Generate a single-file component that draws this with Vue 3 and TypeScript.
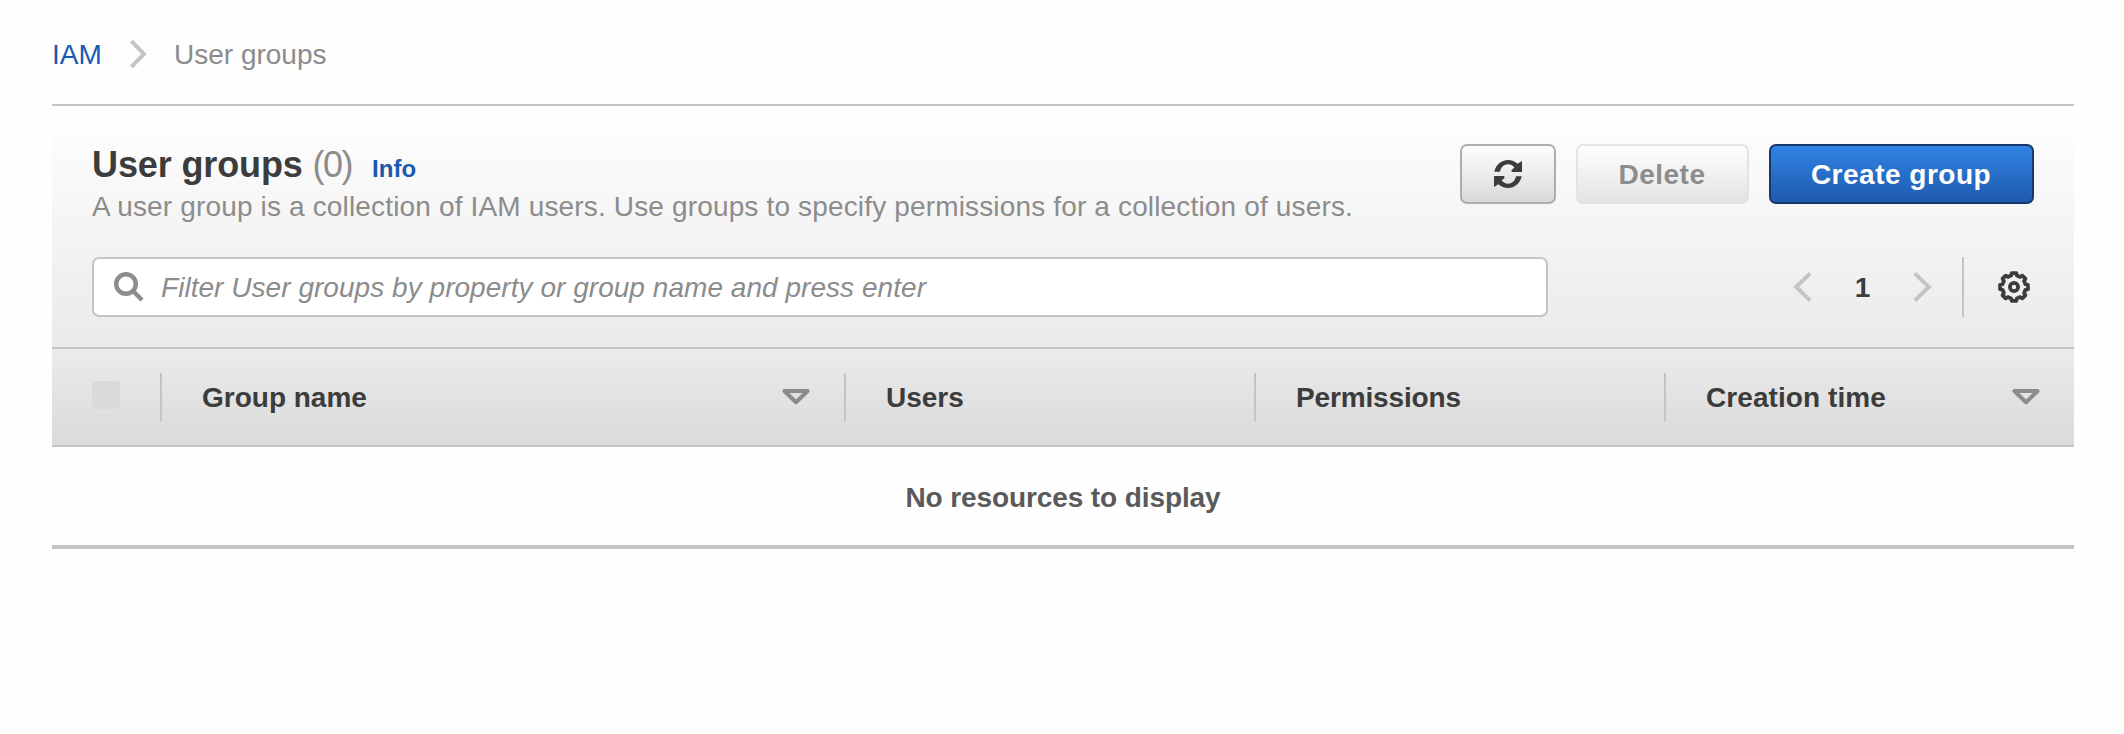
<script setup lang="ts">
interface Column {
  key: string
  label: string
  sortable: boolean
}

const columns: Column[] = [
  { key: 'name', label: 'Group name', sortable: true },
  { key: 'users', label: 'Users', sortable: false },
  { key: 'permissions', label: 'Permissions', sortable: false },
  { key: 'created', label: 'Creation time', sortable: true },
]

const groupCount = 0

// Outline of the settings gear: eight teeth around (16, 16)
function gearOutline(): string {
  const corners: string[] = []
  const point = (radius: number, degrees: number): string => {
    const angle = (degrees * Math.PI) / 180
    return `${(16 + radius * Math.cos(angle)).toFixed(2)} ${(16 + radius * Math.sin(angle)).toFixed(2)}`
  }
  for (let tooth = 0; tooth < 8; tooth++) {
    const middle = tooth * 45
    corners.push(point(11.8, middle - 14), point(14.1, middle - 9), point(14.1, middle + 9), point(11.8, middle + 14))
  }
  return `M${corners.join('L')}Z`
}

const gearPath = gearOutline()
</script>

<template>
  <main class="page">
    <nav class="breadcrumb">
      <a class="link">IAM</a>
      <svg class="crumb-arrow" width="18" height="30" viewBox="0 0 18 30">
        <path d="M2.4 2.2 15 15 2.4 27.8" />
      </svg>
      <span class="crumb">User groups</span>
    </nav>

    <section class="panel">
      <header class="panel-head">
        <div class="title-row">
          <div class="titles">
            <h1>User groups <span class="count">({{ groupCount }})</span><a class="info">Info</a></h1>
            <p class="description">A user group is a collection of IAM users. Use groups to specify permissions for a collection of users.</p>
          </div>
          <div class="actions">
            <button class="btn refresh" aria-label="Refresh">
              <svg width="28" height="28" viewBox="0 0 28 28">
                <path d="M.3 11.8C1.8 5 7.3 0 14 0c3.7 0 7 1.4 9.6 3.8L28 1v11H18.2Q17 11.4 17.4 10.2L20.4 7.4C18.7 5.5 16.5 4.3 14 4.3 10 4.3 6.9 7.2 6 11.8Z" />
                <path transform="rotate(180 14 14)" d="M.3 11.8C1.8 5 7.3 0 14 0c3.7 0 7 1.4 9.6 3.8L28 1v11H18.2Q17 11.4 17.4 10.2L20.4 7.4C18.7 5.5 16.5 4.3 14 4.3 10 4.3 6.9 7.2 6 11.8Z" />
              </svg>
            </button>
            <button class="btn delete" disabled>Delete</button>
            <button class="btn primary">Create group</button>
          </div>
        </div>

        <div class="tool-row">
          <label class="search">
            <svg width="30" height="30" viewBox="0 0 30 30">
              <circle cx="12" cy="12" r="9.8" />
              <path d="M18.8 18.8 28 28" />
            </svg>
            <input type="text" placeholder="Filter User groups by property or group name and press enter" />
          </label>
          <div class="pager">
            <svg width="20" height="32" viewBox="0 0 20 32"><path d="M17.2 2.4 3.2 16 17.2 29.6" /></svg>
            <span class="page-number">1</span>
            <svg width="20" height="32" viewBox="0 0 20 32"><path d="M2.8 2.4 16.8 16 2.8 29.6" /></svg>
          </div>
          <div class="settings">
            <svg width="32" height="32" viewBox="0 0 32 32">
              <path :d="gearPath" />
              <circle cx="16" cy="16" r="4.1" />
            </svg>
          </div>
        </div>
      </header>

      <div class="table-head">
        <div class="cell select"><span class="checkbox"></span></div>
        <div v-for="column in columns" :key="column.key" class="cell" :class="column.key">
          <span class="label">{{ column.label }}</span>
          <svg v-if="column.sortable" width="28" height="16" viewBox="0 0 28 16">
            <path d="M2.4 2H25.6L14 13.2Z" />
          </svg>
        </div>
      </div>
      <div class="empty">No resources to display</div>
    </section>
  </main>
</template>

<style>
body {
  background: #fefefe;
}
</style>

<style scoped>
.page {
  box-sizing: border-box;
  width: 2124px;
  height: 734px;
  padding: 34px 50px 0 52px;
  font-family: "Liberation Sans", Arial, sans-serif;
  font-size: 28px;
  color: #3c3c3c;
}

svg {
  display: block;
  flex: none;
  fill: none;
}

.breadcrumb {
  display: flex;
  align-items: center;
  height: 40px;
  color: #8c8c8c;
}

.link,
.info {
  color: #1b59b0;
}

.link {
  width: 77px;
  padding-top: 2px;
}

.crumb {
  padding-top: 2px;
}

.crumb-arrow {
  margin-right: 27px;
  stroke: #c4c4c4;
  stroke-width: 4;
}

.panel {
  width: 2022px;
  margin-top: 30px;
}

.panel-head {
  box-sizing: border-box;
  height: 245px;
  padding: 36px 40px 0;
  border-top: 2px solid #c4c4c4;
  border-bottom: 2px solid #c4c4c4;
  background: linear-gradient(#ffffff, #eaeaea);
}

.title-row {
  display: flex;
  justify-content: space-between;
  height: 115px;
}

h1 {
  height: 45px;
  margin: 0;
  font-size: 36px;
  line-height: 45px;
  letter-spacing: -0.12px;
  white-space: nowrap;
}

.count {
  font-weight: 400;
  color: #8c8c8c;
  letter-spacing: -1.5px;
}

.info {
  margin-left: 20px;
  font-size: 24px;
  line-height: 1;
  letter-spacing: 0;
}

.description {
  margin: 0;
  line-height: 40px;
  letter-spacing: 0.155px;
  color: #8c8c8c;
  white-space: nowrap;
}

.actions {
  display: flex;
  gap: 20px;
  margin-top: 2px;
}

.btn {
  display: flex;
  align-items: center;
  justify-content: center;
  box-sizing: border-box;
  height: 60px;
  padding: 1px 1px 0 0;
  border: 2px solid #adadad;
  border-radius: 7px;
  background: linear-gradient(#ffffff, #d8d8d8) border-box;
  font: bold 28px "Liberation Sans", Arial, sans-serif;
  letter-spacing: 0.5px;
}

.refresh {
  width: 96px;
  padding: 0;
}

.refresh svg {
  fill: #3c3c3c;
}

.delete {
  width: 173px;
  border-color: #e3e3e3;
  background: linear-gradient(#ffffff, #e2e2e2) border-box;
  color: #8c8c8c;
}

.primary {
  width: 265px;
  border-color: #16396b;
  background: linear-gradient(#3184e5, #1e59ac) border-box;
  color: #ffffff;
}

.tool-row {
  display: flex;
  height: 60px;
}

.search {
  display: flex;
  align-items: center;
  box-sizing: border-box;
  width: 1456px;
  padding-left: 20px;
  border: 2px solid #c4c4c4;
  border-radius: 7px;
  background: #ffffff;
}

.search svg {
  stroke: #8c8c8c;
  stroke-width: 4.4;
}

input {
  flex: 1;
  height: 50px;
  margin: 0 0 0 17px;
  padding: 2px 0 0;
  border: 0;
  outline: 0;
  background: none;
  font: 28px "Liberation Sans", Arial, sans-serif;
  letter-spacing: 0.04px;
}

input::placeholder {
  font-style: italic;
  color: #8c8c8c;
}

.pager {
  display: flex;
  align-items: center;
  justify-content: space-between;
  width: 139px;
  margin-left: 245px;
}

.pager svg {
  stroke: #c4c4c4;
  stroke-width: 4;
}

.page-number {
  padding-top: 1px;
  font-weight: 700;
}

.settings {
  display: flex;
  align-items: center;
  margin-left: 30px;
  padding-left: 34px;
  border-left: 2px solid #c4c4c4;
}

.settings svg {
  stroke: #3c3c3c;
  stroke-width: 3.8;
  stroke-linejoin: round;
}

.table-head {
  display: grid;
  grid-template-columns: 110px 684px 410px 410px 408px;
  align-items: center;
  height: 96px;
  border-bottom: 2px solid #c4c4c4;
  background: linear-gradient(#ebebeb, #dadada);
  font-weight: 700;
}

.cell {
  display: flex;
  align-items: center;
  justify-content: space-between;
  box-sizing: border-box;
  height: 48px;
  padding: 0 34px 0 40px;
  border-right: 2px solid #c4c4c4;
}

.cell:last-child {
  border-right: 0;
}

.label {
  padding-top: 2px;
}

.permissions {
  letter-spacing: -0.15px;
}

.created {
  letter-spacing: 0.08px;
}

.cell svg {
  stroke: #8c8c8c;
  stroke-width: 4;
  stroke-linejoin: round;
}

.checkbox {
  width: 28px;
  height: 28px;
  margin-bottom: 4px;
  border-radius: 4px;
  background: #dadada;
}

.empty {
  height: 98px;
  border-bottom: 4px solid #c4c4c4;
  border-radius: 2px 2px 0 0;
  color: #5a5a5a;
  font-weight: 700;
  line-height: 101px;
  letter-spacing: -0.1px;
  text-align: center;
}
</style>
